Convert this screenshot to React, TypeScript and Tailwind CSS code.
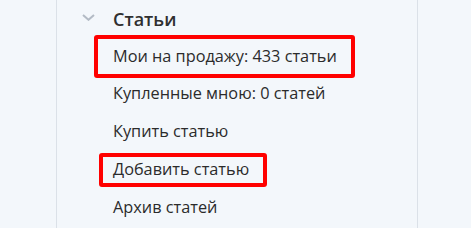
import React from "react";

type Item = {
  label: string;
  box?: string;
};

const items: Item[] = [
  { label: "Мои на продажу: 433 статьи", box: "-left-[19px] -right-[18px] top-[-2.5px] bottom-[-3px]" },
  { label: "Купленные мною: 0 статей" },
  { label: "Купить статью" },
  { label: "Добавить статью", box: "-left-[14px] -right-[18px] top-[2.5px] bottom-[1.5px]" },
  { label: "Архив статей" },
];

function Chevron() {
  return (
    <svg width="13" height="7" viewBox="0 0 13 7" className="shrink-0 -mt-[4px]">
      <path d="M1 1l5.5 4.8 5.5-4.8" fill="none" stroke="#b3bbc5" strokeWidth="2" />
    </svg>
  );
}

function App() {
  return (
    <div
      className="w-[471px] h-[228px] overflow-hidden bg-[#f3f7fb] flex"
      style={{ fontFamily: '"Open Sans", sans-serif' }}
    >
      <div className="w-[57px] shrink-0 border-r border-[#dbe1e8]" />
      <div className="w-[361px] shrink-0 border-r border-[#dbe1e8]">
        <div className="flex items-center h-[37.5px] pt-[2px] pl-[25px]">
          <Chevron />
          <span className="ml-[18px] text-[18px] font-semibold text-[#2f2f2f]">
            Статьи
          </span>
        </div>
        <ul className="pl-[56px]">
          {items.map((item) => (
            <li key={item.label} className="h-[37.75px] leading-[37.75px]">
              <span className="relative inline-block text-[16.3px] text-[#2b2b2b]">
                {item.label}
                {item.box && (
                  <span
                    className={`absolute ${item.box} border-4 border-[#ff0000] rounded-[3px] pointer-events-none`}
                  />
                )}
              </span>
            </li>
          ))}
        </ul>
      </div>
      <div className="flex-1" />
    </div>
  );
}

export default App;
